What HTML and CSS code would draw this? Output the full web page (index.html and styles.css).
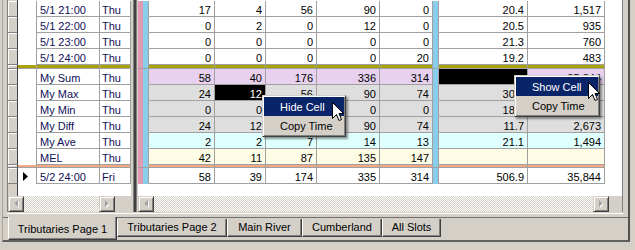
FILE: index.html
```html
<!DOCTYPE html>
<html lang="en">
<head>
<meta charset="UTF-8">
<title>Slot Table</title>
<link rel="stylesheet" href="styles.css">
</head>
<body>
<div class="window">
  <div class="frame">
    <div class="page">
      <div class="panes">
        <!-- left pane: timesteps -->
        <div class="pane left-pane">
          <div class="grid">
            <div class="row"><div class="hdr"></div><div class="ind"></div><div class="c name">5/1 21:00</div><div class="c day">Thu</div></div>
            <div class="row"><div class="hdr"></div><div class="ind"></div><div class="c name">5/1 22:00</div><div class="c day">Thu</div></div>
            <div class="row"><div class="hdr"></div><div class="ind"></div><div class="c name">5/1 23:00</div><div class="c day">Thu</div></div>
            <div class="row"><div class="hdr"></div><div class="ind"></div><div class="c name">5/1 24:00</div><div class="c day">Thu</div></div>
            <div class="row sep olive"><div class="hdr"></div><div class="ind"></div><div class="c name"></div><div class="c day"></div></div>
            <div class="row"><div class="hdr"></div><div class="ind"></div><div class="c name">My Sum</div><div class="c day">Thu</div></div>
            <div class="row"><div class="hdr"></div><div class="ind"></div><div class="c name">My Max</div><div class="c day">Thu</div></div>
            <div class="row"><div class="hdr"></div><div class="ind"></div><div class="c name">My Min</div><div class="c day">Thu</div></div>
            <div class="row"><div class="hdr"></div><div class="ind"></div><div class="c name">My Diff</div><div class="c day">Thu</div></div>
            <div class="row"><div class="hdr"></div><div class="ind"></div><div class="c name">My Ave</div><div class="c day">Thu</div></div>
            <div class="row"><div class="hdr"></div><div class="ind"></div><div class="c name">MEL</div><div class="c day">Thu</div></div>
            <div class="row sep orange"><div class="hdr"></div><div class="ind"></div><div class="c name"></div><div class="c day"></div></div>
            <div class="row"><div class="hdr"></div><div class="ind"><svg width="5" height="9" viewBox="0 0 5 9"><path d="M0 0L5 4.5L0 9Z" fill="#000"/></svg></div><div class="c name">5/2 24:00</div><div class="c day">Fri</div></div>
          </div>
          <div class="fill"></div>
          <div class="hscroll">
            <div class="sbtn"><svg width="5" height="8" viewBox="0 0 5 8"><path d="M4 0V7L0.5 3.5Z" fill="#fff" transform="translate(1 1)"/><path d="M4 0V7L0.5 3.5Z" fill="#a0a0a0"/></svg></div>
            <div class="track"></div>
            <div class="sbtn"><svg width="5" height="8" viewBox="0 0 5 8"><path d="M0 0V7L3.5 3.5Z" fill="#fff" transform="translate(1 1)"/><path d="M0 0V7L3.5 3.5Z" fill="#a0a0a0"/></svg></div>
            <div class="corner"></div>
          </div>
        </div>

        <div class="splitter"></div>

        <!-- right pane: slot values -->
        <div class="pane right-pane">
          <div class="grid">
            <div class="row"><div class="c pk"></div><div class="c bl"></div><div class="c n w1">17</div><div class="c n w2">4</div><div class="c n w3">56</div><div class="c n w4">90</div><div class="c n w5">0</div><div class="c bl"></div><div class="c n w6">20.4</div><div class="c n w7">1,517</div></div>
            <div class="row"><div class="c pk"></div><div class="c bl"></div><div class="c n w1">0</div><div class="c n w2">2</div><div class="c n w3">0</div><div class="c n w4">12</div><div class="c n w5">0</div><div class="c bl"></div><div class="c n w6">20.5</div><div class="c n w7">935</div></div>
            <div class="row"><div class="c pk"></div><div class="c bl"></div><div class="c n w1">0</div><div class="c n w2">0</div><div class="c n w3">0</div><div class="c n w4">0</div><div class="c n w5">0</div><div class="c bl"></div><div class="c n w6">21.3</div><div class="c n w7">760</div></div>
            <div class="row"><div class="c pk"></div><div class="c bl"></div><div class="c n w1">0</div><div class="c n w2">0</div><div class="c n w3">0</div><div class="c n w4">0</div><div class="c n w5">20</div><div class="c bl"></div><div class="c n w6">19.2</div><div class="c n w7">483</div></div>
            <div class="row sep olive"><div class="c pk"></div><div class="c bl"></div><div class="c n w1"></div><div class="c n w2"></div><div class="c n w3"></div><div class="c n w4"></div><div class="c n w5"></div><div class="c bl"></div><div class="c n w6"></div><div class="c n w7"></div></div>
            <div class="row sum"><div class="c pk"></div><div class="c bl"></div><div class="c n w1">58</div><div class="c n w2">40</div><div class="c n w3">176</div><div class="c n w4">336</div><div class="c n w5">314</div><div class="c bl"></div><div class="c n w6 blk"></div><div class="c n w7">35,844</div></div>
            <div class="row stat"><div class="c pk"></div><div class="c bl"></div><div class="c n w1">24</div><div class="c n w2 blk">12</div><div class="c n w3">56</div><div class="c n w4">90</div><div class="c n w5">74</div><div class="c bl"></div><div class="c n w6">30.0</div><div class="c n w7"></div></div>
            <div class="row stat"><div class="c pk"></div><div class="c bl"></div><div class="c n w1">0</div><div class="c n w2">0</div><div class="c n w3"></div><div class="c n w4">0</div><div class="c n w5">0</div><div class="c bl"></div><div class="c n w6">18.3</div><div class="c n w7"></div></div>
            <div class="row stat"><div class="c pk"></div><div class="c bl"></div><div class="c n w1">24</div><div class="c n w2">12</div><div class="c n w3"></div><div class="c n w4">90</div><div class="c n w5">74</div><div class="c bl"></div><div class="c n w6">11.7</div><div class="c n w7">2,673</div></div>
            <div class="row ave"><div class="c pk"></div><div class="c bl"></div><div class="c n w1">2</div><div class="c n w2">2</div><div class="c n w3">7</div><div class="c n w4">14</div><div class="c n w5">13</div><div class="c bl"></div><div class="c n w6">21.1</div><div class="c n w7">1,494</div></div>
            <div class="row mel"><div class="c pk"></div><div class="c bl"></div><div class="c n w1">42</div><div class="c n w2">11</div><div class="c n w3">87</div><div class="c n w4">135</div><div class="c n w5">147</div><div class="c bl"></div><div class="c n w6"></div><div class="c n w7"></div></div>
            <div class="row sep orange"><div class="c pk"></div><div class="c bl"></div><div class="c n w1"></div><div class="c n w2"></div><div class="c n w3"></div><div class="c n w4"></div><div class="c n w5"></div><div class="c bl"></div><div class="c n w6"></div><div class="c n w7"></div></div>
            <div class="row"><div class="c pk"></div><div class="c bl"></div><div class="c n w1">58</div><div class="c n w2">39</div><div class="c n w3">174</div><div class="c n w4">335</div><div class="c n w5">314</div><div class="c bl"></div><div class="c n w6">506.9</div><div class="c n w7">35,844</div></div>
          </div>
          <div class="fill"></div>
          <div class="hscroll">
            <div class="sbtn"><svg width="5" height="8" viewBox="0 0 5 8"><path d="M4 0V7L0.5 3.5Z" fill="#fff" transform="translate(1 1)"/><path d="M4 0V7L0.5 3.5Z" fill="#a0a0a0"/></svg></div>
            <div class="track"></div>
            <div class="sbtn"><svg width="5" height="8" viewBox="0 0 5 8"><path d="M0 0V7L3.5 3.5Z" fill="#fff" transform="translate(1 1)"/><path d="M0 0V7L3.5 3.5Z" fill="#a0a0a0"/></svg></div>
            <div class="corner small"></div>
          </div>
        </div>
      </div>
      <div class="page-foot"></div>
    </div>

    <div class="tabs">
      <div class="tab active t1">Tributaries Page 1</div>
      <div class="tab t2">Tributaries Page 2</div>
      <div class="tab t3">Main River</div>
      <div class="tab t4">Cumberland</div>
      <div class="tab t5">All Slots</div>
    </div>
  </div>

  <div class="menu menu-hide">
    <div class="item on">Hide Cell</div>
    <div class="item">Copy Time</div>
  </div>
  <div class="menu menu-show">
    <div class="item on">Show Cell</div>
    <div class="item">Copy Time</div>
  </div>

  <svg class="cursor cursor-hide" width="13" height="20" viewBox="0 0 13 20"><path d="M0.5 0.5V16.5L4.5 12.5L7 18.5L9.5 17.5L7 11.5H11.5Z" fill="#fff" stroke="#000" stroke-linejoin="miter"/></svg>
  <svg class="cursor cursor-show" width="13" height="20" viewBox="0 0 13 20"><path d="M0.5 0.5V16.5L4.5 12.5L7 18.5L9.5 17.5L7 11.5H11.5Z" fill="#fff" stroke="#000" stroke-linejoin="miter"/></svg>
</div>
</body>
</html>
```

FILE: styles.css
```css
body {
    margin: 0;
    background: #d4d0c8;
    font-family: "Liberation Sans", Arial, sans-serif;
    font-size: 11px;
    color: #000;
}

.window {
    position: relative;
    width: 635px;
    height: 250px;
    overflow: hidden;
}

.frame {
    margin-left: 2px;
    width: 628px;
    height: 242px;
    box-sizing: border-box;
    border-left: 1px solid #a8a49c;
    border-right: 2px solid #505050;
    border-bottom: 2px solid #606060;
    display: flex;
    flex-direction: column;
}

.page {
    padding-left: 4px;
}

.panes {
    display: flex;
    width: 616px;
    height: 212px;
    box-sizing: border-box;
    border-left: 1px solid #808080;
    border-right: 1px solid #808080;
    background: #fff;
}

.page-foot {
    height: 5px;
    width: 616px;
    background: linear-gradient(#d4d0c8 1px, #fff 1px 2px, #d4d0c8 2px);
}

.pane {
    display: flex;
    flex-direction: column;
    flex-shrink: 0;
}
.left-pane { width: 123px; }
.right-pane { width: 484px; }

.left-pane .grid,
.left-pane .fill {
    background: linear-gradient(to right, #d4d0c8 0 9px, #404040 9px 10px, #fff 10px);
}

.grid {
    padding-top: 1px;
}

.fill {
    flex: 1;
}

/* grid rows */
.row {
    display: flex;
    height: 16px;
}

.c {
    flex-shrink: 0;
    box-sizing: border-box;
    height: 16px;
    border-right: 1px solid #a0a0a0;
    border-bottom: 1px solid #a0a0a0;
    padding: 2px 3px 0;
    line-height: 14px;
    white-space: nowrap;
    overflow: hidden;
}

.n { text-align: right; }

.hdr {
    flex-shrink: 0;
    width: 10px;
    height: 16px;
    box-sizing: border-box;
    background: #d4d0c8;
    border-right: 1px solid #404040;
    border-bottom: 1px solid #808080;
    box-shadow: inset 1px 1px #fff;
}

.ind {
    flex-shrink: 0;
    width: 19px;
    box-sizing: border-box;
    border-right: 1px solid #a0a0a0;
    display: flex;
    align-items: center;
    padding-left: 5px;
    background: #fff;
}

.name {
    width: 63px;
    color: #101058;
}
.day {
    width: 31px;
    padding-left: 2px;
    color: #101058;
}

.pk {
    width: 5px;
    padding: 0;
    border-right: 0;
    background: #e29bb2;
    border-bottom-color: #e29bb2;
}
.bl {
    width: 6px;
    padding: 0;
    background: #88cdea;
    border-bottom-color: #88cdea;
}

.w1 { width: 66px; }
.w2 { width: 51px; }
.w3 { width: 51px; }
.w4 { width: 63px; }
.w5 { width: 53px; }
.w6 { width: 89px; }
.w7 { width: 77px; }

/* separator bands */
.sep,
.sep .c,
.sep .hdr,
.sep .ind {
    height: 4px;
}
.sep.orange,
.sep.orange .c,
.sep.orange .hdr,
.sep.orange .ind {
    height: 3px;
}
.sep .c,
.sep .ind {
    padding: 0;
    border-bottom: 1px solid #a0a0a0;
}
.olive .n,
.olive .name,
.olive .day,
.olive .ind { background: #aaa20c; }
.orange .n,
.orange .name,
.orange .day,
.orange .ind { background: #f5a985; }
.sep .pk,
.sep .bl { border-bottom-color: #a0a0a0; }

.sum .n { background: #e7d1ee; }
.stat .n { background: #dedede; }
.ave .n { background: #e0ffff; }
.mel .n { background: #fffce6; }
.row .blk {
    background: #000;
    color: #fff;
}

/* scrollbars */
.hscroll {
    display: flex;
    height: 16px;
    flex-shrink: 0;
}
.sbtn {
    width: 16px;
    height: 16px;
    flex-shrink: 0;
    box-sizing: border-box;
    background: #d4d0c8;
    border: 1px solid;
    border-color: #d4d0c8 #404040 #404040 #d4d0c8;
    box-shadow: inset 1px 1px #fff, inset -1px -1px #808080;
    display: flex;
    align-items: center;
    justify-content: center;
}
.track {
    flex: 1;
    background: repeating-conic-gradient(#d4d0c8 0 25%, #fff 0 50%) 0 0 / 2px 2px;
}
.corner {
    width: 16px;
    flex-shrink: 0;
    background: #d4d0c8;
}
.corner.small { width: 13px; }

.splitter {
    width: 7px;
    flex-shrink: 0;
    background: linear-gradient(to right, #d4d0c8 0 2px, #808080 2px 3px, #404040 3px 5px, #808080 5px 6px, #d4d0c8 6px);
}

/* tabs */
.tabs {
    display: flex;
    height: 22px;
    padding-left: 5px;
    border-top: 1px solid #707070;
}
.tab {
    height: 18px;
    margin-top: 1px;
    box-sizing: border-box;
    border-left: 1px solid #fff;
    border-right: 1px solid #404040;
    border-bottom: 1px solid #404040;
    box-shadow: inset -1px -1px #808080;
    text-align: center;
    line-height: 16px;
    white-space: nowrap;
}
.tab.active {
    height: 23px;
    margin-top: -1px;
    padding-top: 4px;
    background: #d4d0c8;
}
.t1 { width: 109px; }
.t2 { width: 110px; }
.t3 { width: 75px; }
.t4 { width: 80px; }
.t5 { width: 59px; }

/* context menus */
.menu {
    position: absolute;
    box-sizing: border-box;
    background: #d4d0c8;
    border: 1px solid;
    border-color: #d4d0c8 #404040 #404040 #d4d0c8;
    box-shadow: inset 1px 1px #fff, inset -1px -1px #808080, 2px 2px 2px rgba(0, 0, 0, 0.4);
    padding: 1px;
}
.menu-hide {
    left: 262px;
    top: 95px;
    width: 84px;
}
.menu-show {
    left: 514px;
    top: 75px;
    width: 86px;
}
.item {
    height: 19px;
    box-sizing: border-box;
    padding: 2px 0 0 16px;
    line-height: 17px;
    white-space: nowrap;
}
.item.on {
    background: #0a246a;
    color: #fff;
}

.cursor {
    position: absolute;
}
.cursor-hide {
    left: 332px;
    top: 102px;
}
.cursor-show {
    left: 588px;
    top: 82px;
}
```
